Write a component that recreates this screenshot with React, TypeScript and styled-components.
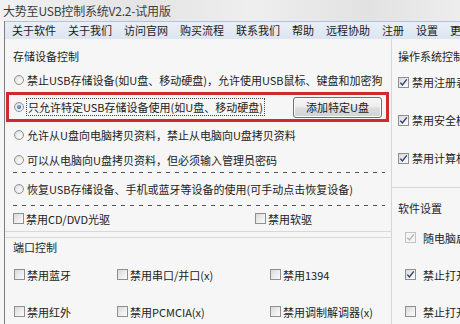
import React from "react";
import styled, { createGlobalStyle } from "styled-components";

const Global = createGlobalStyle`
  html, body { margin: 0; padding: 0; }
  body {
    width: 460px; height: 324px; overflow: hidden;
    background: #f6f6f6;
    font-family: "Noto Sans CJK SC", "Noto Sans", sans-serif;
    font-size: 11px; color: #222;
  }
`;

const Screen = styled.div`
  width: 460px; height: 324px; overflow: hidden;
  display: flex; flex-direction: column;
`;

const TitleBar = styled.div`
  height: 21px; flex: none;
  display: flex; align-items: center;
  padding-left: 3px;
  font-size: 12px; color: #3c3c3c; letter-spacing: -0.2px;
  background: linear-gradient(90deg, #f1f1f1 0%, #e4e4e4 30%, #eeeeee 55%, #e2e2e2 80%, #ededed 100%);
  white-space: nowrap;
`;

const Window = styled.div`
  flex: 1; margin-left: 4px;
  border-left: 1px solid #7d7d7d;
  display: flex; flex-direction: column;
  background: #f6f6f6;
  min-height: 0;
`;

const MenuBar = styled.div`
  height: 17px; flex: none;
  display: flex; align-items: center;
  padding-left: 1px;
  border-top: 1px solid #b4c2d3;
  background: linear-gradient(180deg, #e9eff7 0%, #dce5f0 100%);
  white-space: nowrap; overflow: hidden;
`;

const MenuItem = styled.span`
  padding: 0 6px; color: #1b1b1b; line-height: 17px;
`;

const Body = styled.div`
  flex: 1; display: flex; min-height: 0;
`;

const LeftCol = styled.div`
  width: 386px; flex: none;
  border-right: 1px solid #d6d6d6;
  display: flex; flex-direction: column;
`;

const RightCol = styled.div`
  flex: 1; overflow: hidden; white-space: nowrap;
  display: flex; flex-direction: column;
`;

const Group = styled.div<{ $top: number; $bottom?: boolean; $pb?: number }>`
  padding-top: ${p => p.$top}px;
  padding-bottom: ${p => p.$pb ?? 0}px;
  border-bottom: ${p => (p.$bottom ? "1px solid #d8d8d8" : "none")};
  display: flex; flex-direction: column;
`;

const GroupGap = styled.div`
  height: 5px; flex: none; border-bottom: 1px solid #d8d8d8;
`;

const Label = styled.div<{ $h: number; $pl: number }>`
  height: ${p => p.$h}px; padding-left: ${p => p.$pl}px;
  display: flex; align-items: center; color: #1e1e1e;
`;

const Row = styled.div<{ $h: number; $pl?: number }>`
  height: ${p => p.$h}px; padding-left: ${p => p.$pl ?? 9}px;
  display: flex; align-items: center; white-space: nowrap;
`;

const RedBox = styled.div`
  height: 24px; margin: 0 2px 0 1px;
  border: 3px solid #cf2a30;
  padding-left: 5px; padding-right: 4px;
  display: flex; align-items: center;
`;

const Focus = styled.span`
  outline: 1px dotted #444; outline-offset: 0px; padding: 0 1px;
`;

const Button = styled.button`
  margin-left: auto;
  width: 89px; height: 21px;
  border: 1px solid #707070; border-radius: 3px;
  background: linear-gradient(180deg, #f7f7f7 0%, #ececec 48%, #dddddd 52%, #d3d3d3 100%);
  box-shadow: inset 0 0 0 1px #fbfbfb;
  font-family: inherit; font-size: 11px; color: #1a1a1a;
  padding: 0; display: flex; align-items: center; justify-content: center;
`;

const Dashed = styled.div`
  height: 1px; margin: 0 6px 0 8px; flex: none;
  background: repeating-linear-gradient(90deg, #555 0 4px, transparent 4px 9px);
`;

const RadioCircle = styled.span<{ $on?: boolean }>`
  width: 10px; height: 10px; flex: none; border-radius: 50%;
  border: 1px solid #8f9396;
  box-sizing: border-box;
  background: radial-gradient(circle at 60% 65%, #fbfbfb 0%, #e6e6e6 60%, #d0d0d0 100%);
  margin-right: 3px; position: relative;
  &::after {
    content: ""; display: ${p => (p.$on ? "block" : "none")};
    position: absolute; left: 2px; top: 2px; width: 4px; height: 4px; border-radius: 50%;
    background: radial-gradient(circle at 40% 35%, #8fc0ee 0%, #2f6eb8 60%, #1d4b86 100%);
  }
`;

const Box = styled.span<{ $dim?: boolean; $gap: number }>`
  width: 11px; height: 11px; flex: none; box-sizing: border-box;
  border: 1px solid ${p => (p.$dim ? "#c2c2c2" : "#8e8f8f")};
  background: ${p => (p.$dim ? "#f4f4f4" : "linear-gradient(135deg, #d8d8d8 0%, #eeeeee 55%, #fbfbfb 100%)")};
  margin-right: ${p => p.$gap}px;
  display: flex; align-items: center; justify-content: center;
`;

const Cell = styled.div<{ $w?: number }>`
  width: ${p => (p.$w ? `${p.$w}px` : "auto")}; flex: none;
  display: flex; align-items: center;
`;

const Radio: React.FC<{ on?: boolean; children: React.ReactNode }> = ({ on, children }) => (
  <>
    <RadioCircle $on={on} />
    {children}
  </>
);

const Check: React.FC<{ checked?: boolean; dim?: boolean; gap?: number; children: React.ReactNode }> = ({
  checked,
  dim,
  gap = 2,
  children,
}) => (
  <>
    <Box $dim={dim} $gap={gap}>
      {checked && (
        <svg width="9" height="9" viewBox="0 0 9 9">
          <path d="M1.3 4.6 L3.4 7 L7.8 1.4" fill="none" stroke={dim ? "#b5b5b5" : "#2c3f70"} strokeWidth="1.4" />
        </svg>
      )}
    </Box>
    {children}
  </>
);

const menu = ["关于软件", "关于我们", "访问官网", "购买流程", "联系我们", "帮助", "远程协助", "注册", "设置", "更多"];

export default function App() {
  return (
    <Screen>
      <Global />
      <TitleBar>大势至USB控制系统V2.2-试用版</TitleBar>
      <Window>
        <MenuBar>
          {menu.map(m => (
            <MenuItem key={m}>{m}</MenuItem>
          ))}
        </MenuBar>
        <Body>
          <LeftCol>
            <Group $top={5} $bottom>
              <Label $h={24} $pl={8}>存储设备控制</Label>
              <Row $h={24}>
                <Radio>禁止USB存储设备(如U盘、移动硬盘)，允许使用USB鼠标、键盘和加密狗</Radio>
              </Row>
              <RedBox>
                <Radio on>
                  <Focus>只允许特定USB存储设备使用(如U盘、移动硬盘)</Focus>
                </Radio>
                <Button>添加特定U盘</Button>
              </RedBox>
              <Row $h={26}>
                <Radio>允许从U盘向电脑拷贝资料，禁止从电脑向U盘拷贝资料</Radio>
              </Row>
              <Row $h={24}>
                <Radio>可以从电脑向U盘拷贝资料，但必须输入管理员密码</Radio>
              </Row>
              <Dashed />
              <Row $h={32}>
                <Radio>恢复USB存储设备、手机或蓝牙等设备的使用(可手动点击恢复设备)</Radio>
              </Row>
              <Dashed />
              <Row $h={25} $pl={8}>
                <Cell $w={242}>
                  <Check>禁用CD/DVD光驱</Check>
                </Cell>
                <Cell>
                  <Check>禁用软驱</Check>
                </Cell>
              </Row>
            </Group>
            <GroupGap />
            <Group $top={0}>
              <Label $h={18} $pl={8}>端口控制</Label>
              <Row $h={37}>
                <Cell $w={103}>
                  <Check>禁用蓝牙</Check>
                </Cell>
                <Cell $w={153}>
                  <Check>禁用串口/并口(x)</Check>
                </Cell>
                <Cell>
                  <Check>禁用1394</Check>
                </Cell>
              </Row>
              <Row $h={37}>
                <Cell $w={103}>
                  <Check>禁用红外</Check>
                </Cell>
                <Cell $w={153}>
                  <Check>禁用PCMCIA(x)</Check>
                </Cell>
                <Cell>
                  <Check>禁用调制解调器(x)</Check>
                </Cell>
              </Row>
            </Group>
          </LeftCol>
          <RightCol>
            <Group $top={5} $pb={10} $bottom>
              <Label $h={19} $pl={6}>
                <span style={{ paddingTop: 5 }}>操作系统控制</span>
              </Label>
              <Row $h={38} $pl={6}>
                <Check checked gap={3}>禁用注册表</Check>
              </Row>
              <Row $h={38} $pl={6}>
                <Check checked gap={3}>禁用安全模式</Check>
              </Row>
              <Row $h={38} $pl={6}>
                <Check checked gap={3}>禁用计算机管理</Check>
              </Row>
            </Group>
            <Group $top={9}>
              <Label $h={22} $pl={6}>软件设置</Label>
              <Row $h={37} $pl={13}>
                <Check checked dim gap={7}>随电脑启动</Check>
              </Row>
              <Row $h={37} $pl={13}>
                <Check checked gap={7}>禁止打开任务管理器</Check>
              </Row>
              <Row $h={37} $pl={13}>
                <Check gap={7}>禁止打开注册表</Check>
              </Row>
            </Group>
          </RightCol>
        </Body>
      </Window>
    </Screen>
  );
}
